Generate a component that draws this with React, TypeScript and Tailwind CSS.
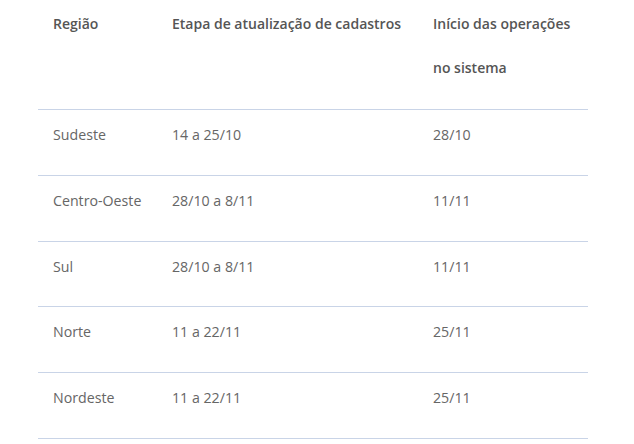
import React from "react";

const rows = [
  ["Sudeste", "14 a 25/10", "28/10"],
  ["Centro-Oeste", "28/10 a 8/11", "11/11"],
  ["Sul", "28/10 a 8/11", "11/11"],
  ["Norte", "11 a 22/11", "25/11"],
  ["Nordeste", "11 a 22/11", "25/11"],
];

export default function App() {
  return (
    <div className="w-[634px] h-[444px] bg-white overflow-hidden" style={{ fontFamily: "'Open Sans', Lato, sans-serif" }}>
      <table className="ml-[38px] w-[550px] border-collapse table-fixed text-[14px]">
        <colgroup>
          <col className="w-[119px]" />
          <col className="w-[261px]" />
          <col className="w-[170px]" />
        </colgroup>
        <thead>
          <tr className="border-b border-[#c9d4e7]">
            <th className="text-left align-top font-semibold text-[#555555] px-[15px] pt-[2px] pb-[19px] leading-[44px]">Região</th>
            <th className="text-left align-top font-semibold text-[#555555] px-[15px] pt-[2px] pb-[19px] leading-[44px]">Etapa de atualização de cadastros</th>
            <th className="text-left align-top font-semibold text-[#555555] px-[15px] pt-[2px] pb-[19px] leading-[44px]">Início das operações no sistema</th>
          </tr>
        </thead>
        <tbody>
          {rows.map((r) => (
            <tr key={r[0]} className="border-b border-[#c9d4e7]">
              {r.map((c, i) => (
                <td key={i} className="align-top whitespace-nowrap font-normal text-[14.2px] text-[#666666] px-[15px] pt-[3px] pb-[17.8px] leading-[44px]">{c}</td>
              ))}
            </tr>
          ))}
        </tbody>
      </table>
    </div>
  );
}
